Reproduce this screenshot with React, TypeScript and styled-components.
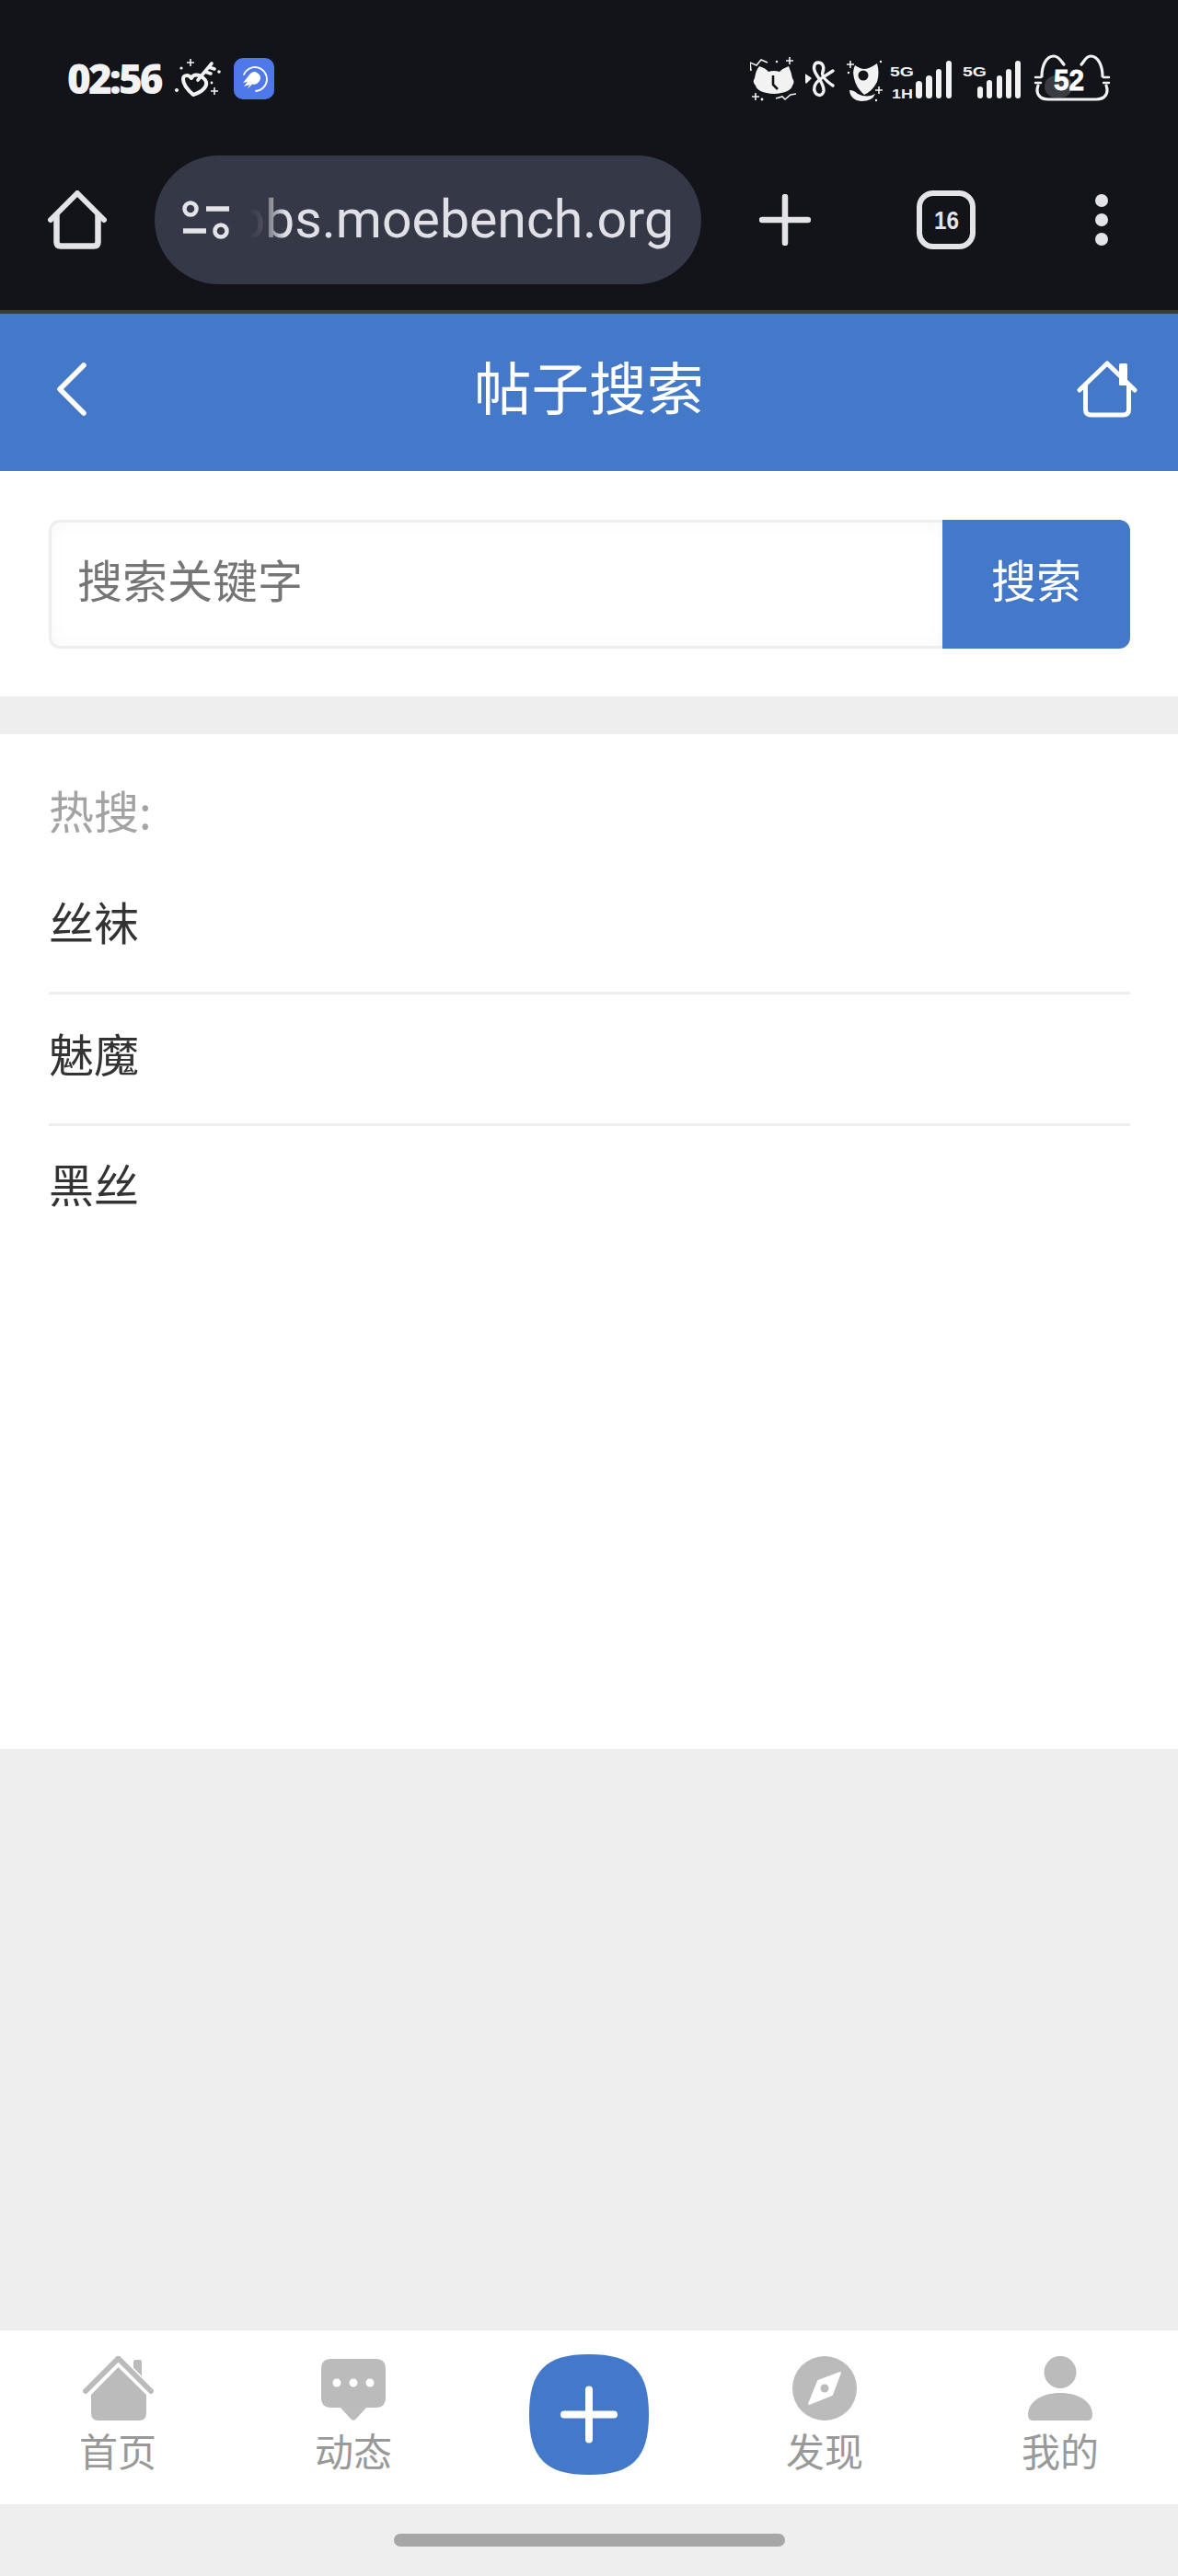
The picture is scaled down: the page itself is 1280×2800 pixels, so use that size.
import React from "react";
import styled, { createGlobalStyle } from "styled-components";

const CJK = `"Noto Sans CJK SC", "Noto Sans", sans-serif`;

const Global = createGlobalStyle`
  html, body { margin: 0; padding: 0; background: #eee; }
  * { box-sizing: border-box; }
  input::placeholder { color: #757575; opacity: 1; }
`;

const Page = styled.div`
  width: 1280px;
  height: 2800px;
  display: flex;
  flex-direction: column;
  background: #eee;
  font-family: ${CJK};
`;

const Chrome = styled.div`
  background: #12141a;
  border-bottom: 4px solid #383a46;
  height: 341px;
  display: flex;
  flex-direction: column;
`;

const StatusBar = styled.div`
  height: 169px;
  padding: 55px 73px 0 73px;
  display: flex;
  justify-content: space-between;
  align-items: flex-start;
`;

const StatusLeft = styled.div`
  height: 60px;
  display: flex;
  align-items: center;
`;

const Time = styled.span`
  width: 117px;
  font-family: "Open Sans", sans-serif;
  font-weight: 800;
  font-size: 44px;
  letter-spacing: -2.8px;
  color: #f2f2f2;
`;

const StatusRight = styled.div`
  display: flex;
  align-items: flex-start;
  height: 60px;
`;

const Toolbar = styled.div`
  display: flex;
  align-items: center;
  height: 140px;
  padding-left: 52px;
`;

const ToolIcon = styled.svg<{ $after: number }>`
  flex: none;
  margin-right: ${(p) => p.$after}px;
  color: #e3e3e8;
`;

const UrlPill = styled.div`
  flex: none;
  width: 594px;
  height: 140px;
  margin-right: 63px;
  border-radius: 70px;
  background: #353846;
  display: flex;
  align-items: center;
  padding-left: 30px;
  padding-right: 30px;
`;

const UrlClip = styled.div`
  flex: 1;
  display: flex;
  justify-content: flex-end;
  overflow: hidden;
  margin-left: 20px;
  mask-image: linear-gradient(to right, transparent 0, rgba(0, 0, 0, 0.12) 14px, rgba(0, 0, 0, 0.5) 24px, #000 40px);
  -webkit-mask-image: linear-gradient(to right, transparent 0, rgba(0, 0, 0, 0.12) 14px, rgba(0, 0, 0, 0.5) 24px, #000 40px);
`;

const UrlText = styled.span`
  font-family: Roboto, "Liberation Sans", sans-serif;
  font-size: 57.2px;
  line-height: 70px;
  color: #e0e0e6;
  white-space: nowrap;
`;

const Header = styled.header`
  height: 171px;
  background: #4478c8;
  display: grid;
  grid-template-columns: 1fr auto 1fr;
  align-items: center;
  padding: 0 44px 8px;
`;

const BackIcon = styled.svg`
  margin-left: 18px;
`;

const Title = styled.h1`
  margin: 0 0 8px;
  font-size: 62.5px;
  font-weight: 400;
  color: #fff;
  line-height: 80px;
`;

const HeaderHome = styled.svg`
  justify-self: end;
`;

const SearchPanel = styled.section`
  background: #fff;
  height: 245px;
  padding: 53px 52px 0 53px;
  display: flex;
  align-items: flex-start;
`;

const SearchInput = styled.input`
  flex: 1;
  min-width: 0;
  height: 140px;
  padding: 0 0 13px 28px;
  border: 3px solid #eee;
  border-right: none;
  border-radius: 12px 0 0 12px;
  box-shadow: inset 0 0 18px rgba(0, 0, 0, 0.035);
  outline: none;
  background: #fff;
  font-family: ${CJK};
  font-size: 49px;
  color: #333;
`;

const SearchButton = styled.button`
  flex: none;
  width: 204px;
  height: 140px;
  padding: 0 0 13px;
  border: none;
  border-radius: 0 12px 12px 0;
  background: #4478c8;
  color: #fff;
  font-family: ${CJK};
  font-size: 49px;
`;

const HotPanel = styled.section`
  margin-top: 41px;
  height: 1103px;
  background: #fff;
  padding: 37px 52px 0 53px;
`;

const HotLabel = styled.div`
  font-size: 49px;
  line-height: 90px;
  color: #a3a3a3;
  height: 103px;
`;

const HotRow = styled.div`
  height: 143px;
  padding-bottom: 15px;
  display: flex;
  align-items: center;
  font-size: 49px;
  color: #333;
  border-bottom: 3px solid #eee;
  &:last-child {
    border-bottom: none;
    padding-bottom: 20px;
  }
`;

const Spacer = styled.div`
  flex: 1;
`;

const BottomNav = styled.nav`
  height: 189px;
  background: #fff;
  display: grid;
  grid-template-columns: repeat(5, 1fr);
`;

const NavItem = styled.div`
  padding-top: 28px;
  display: flex;
  flex-direction: column;
  align-items: center;
`;

const NavIcon = styled.svg`
  display: block;
`;

const NavLabel = styled.span`
  margin-top: 5px;
  font-size: 42px;
  line-height: 54px;
  color: #999;
`;

const PlusCell = styled.div`
  padding-top: 26px;
  display: flex;
  justify-content: center;
`;

const Gesture = styled.div`
  height: 78px;
  padding-top: 32px;
  display: flex;
  justify-content: center;
`;

const GestureBar = styled.div`
  width: 425px;
  height: 14px;
  border-radius: 7px;
  background: #a6a6a6;
`;

const W = "#f2f2f2";
const D = "#12141a";
const GR = "#bbb";

const Spark = ({ x, y, s = 4 }: { x: number; y: number; s?: number }) => (
  <path d={`M${x - s} ${y}H${x + s}M${x} ${y - s}V${y + s}`} stroke={W} strokeWidth={1.6} fill="none" />
);

const KeyIcon = () => (
  <svg width={50} height={50} viewBox="0 0 50 50" style={{ flex: "none", marginRight: 14 }}>
    <path d="M9 26C9 21 15 21 18 25C20 20 27 20 33 27C37 33 30 40 20 43C13 37 9 31 9 26Z" fill="none" stroke={W} strokeWidth={4} strokeLinejoin="round" />
    <path d="M25 27L40 9M37 13L43 15M33 18L39 20" fill="none" stroke={W} strokeWidth={3.6} strokeLinecap="round" />
    <Spark x={17} y={8} />
    <Spark x={43} y={39} />
    <circle cx={7} cy={14} r={1.6} fill={W} />
    <circle cx={48} cy={18} r={1.8} fill={W} />
    <circle cx={2} cy={38} r={2} fill={W} />
    <circle cx={40} cy={30} r={1.4} fill={W} />
  </svg>
);

const AppIcon = () => (
  <svg width={44} height={45} viewBox="0 0 44 45" style={{ flex: "none" }}>
    <rect width={44} height={45} rx={10} fill="#4f78ea" />
    <path d="M11 18A13 13 0 1 1 24 36" fill="none" stroke="#fff" strokeWidth={1.8} strokeLinecap="round" />
    <path d="M18 17A6.5 6.5 0 0 1 28.5 24C27 28 23 29.5 20 28.5L15 33.5L17 29L11 31L15 26L10 27Z" fill="#fff" />
  </svg>
);

const AlarmIcon = () => (
  <svg width={60} height={60} viewBox="0 0 60 60" style={{ flex: "none" }}>
    <path d="M10 17Q17 19 20 23Q26 21 32 23Q36 19 42 17Q45 24 46 30Q49 34 46 38Q44 46 26 47Q8 46 6 38Q2 34 5 30Q6 22 10 17Z" fill={W} />
    <path d="M25 27V37L30 42" fill="none" stroke={D} strokeWidth={2.6} />
    <path d="M1 22L0 13L7 16L12 10L19 13" fill="none" stroke={W} strokeWidth={1.6} />
    <path d="M28 52L35 50L38 53L44 48L50 47" fill="none" stroke={W} strokeWidth={1.6} />
    <Spark x={43} y={11} />
    <Spark x={6} y={50} />
    <circle cx={13} cy={53} r={1.4} fill={W} />
    <circle cx={29} cy={12} r={1.2} fill={W} />
  </svg>
);

const LinkIcon = () => (
  <svg width={45} height={60} viewBox="0 0 45 60" style={{ flex: "none" }}>
    <path d="M30 22L16 31C10 36 8 41 11 46C14 50 19 49 20 44C21 37 14 30 11 24C8 18 10 13 14 13C19 13 21 18 19 23C17 28 24 34 30 38" fill="none" stroke={W} strokeWidth={3.4} strokeLinecap="round" />
    <path d="M0 26L6 30L1 35Z" fill={W} stroke={W} strokeWidth={1.5} strokeLinejoin="round" />
  </svg>
);

const PinIcon = () => (
  <svg width={47} height={60} viewBox="0 0 47 60" style={{ flex: "none" }}>
    <path d="M9 16Q15 20 19 20Q24 20 33 14Q36 24 33 34Q28 44 19 48Q10 40 8 30Q6 22 9 16Z" fill={W} />
    <circle cx={18} cy={27} r={5.5} fill={D} />
    <path d="M3 43Q4 54 16 55Q28 55 31 47Q22 52 12 47Q8 43 3 43Z" fill={W} />
    <Spark x={4} y={15} />
    <Spark x={35} y={43} />
    <circle cx={2} cy={24} r={1.2} fill={W} />
    <circle cx={37} cy={12} r={1.2} fill={W} />
    <circle cx={32} cy={54} r={1.2} fill={W} />
  </svg>
);

const SigText = styled.text`
  font-family: "Liberation Sans", sans-serif;
  font-weight: 700;
  font-size: 15.5px;
  fill: ${W};
`;

const Bars = ({ bars }: { bars: [number, number, number][] }) => (
  <>
    {bars.map(([x, w, top]) => (
      <rect key={x} x={x} y={top} width={w} height={52 - top} rx={w / 2} fill={W} />
    ))}
  </>
);

const Signal1 = () => (
  <svg width={78} height={60} viewBox="0 0 78 60" style={{ flex: "none" }}>
    <SigText x={0} y={28} textLength={26} lengthAdjust="spacingAndGlyphs">5G</SigText>
    <SigText x={2} y={52} textLength={23} lengthAdjust="spacingAndGlyphs">1H</SigText>
    <Bars bars={[[28, 7, 33], [39, 7, 27], [50, 6, 20], [61, 6, 11]]} />
  </svg>
);

const Signal2 = () => (
  <svg width={78} height={60} viewBox="0 0 78 60" style={{ flex: "none" }}>
    <SigText x={1} y={28} textLength={26} lengthAdjust="spacingAndGlyphs">5G</SigText>
    <Bars bars={[[17, 6, 39], [27, 6, 32], [38, 6, 27], [48, 6, 20], [58, 6, 11]]} />
  </svg>
);

const BatteryText = styled.text`
  font-family: "Liberation Sans", sans-serif;
  font-weight: 700;
  font-size: 31px;
  fill: #fff;
  stroke: #fff;
  stroke-width: 0.8px;
`;

const BatteryIcon = () => (
  <svg width={84} height={60} viewBox="0 0 84 60" style={{ flex: "none" }}>
    <path d="M9 28C9 16 14 6 22 6C28 6 30 12 33 15M52 15C55 12 57 6 62 6C70 6 75 16 75 28" fill="none" stroke={W} strokeWidth={3.2} strokeLinecap="round" />
    <path d="M5 38C2 46 6 53 16 53H68C78 53 82 46 79 38" fill="none" stroke={W} strokeWidth={3.2} strokeLinecap="round" />
    <path d="M2 29H8M2 35H8M76 29H82M76 35H82" stroke={W} strokeWidth={2.4} strokeLinecap="round" />
    <rect x={12} y={27} width={30} height={24} rx={12} fill="#3a3c42" />
    <BatteryText x={22} y={43} textLength={33} lengthAdjust="spacingAndGlyphs">52</BatteryText>
  </svg>
);

const TabText = styled.text`
  font-family: "Liberation Sans", sans-serif;
  font-weight: 700;
  font-size: 28px;
  fill: currentColor;
`;

const ChromeHome = () => (
  <ToolIcon $after={52} width={64} height={64} viewBox="0 0 64 64">
    <path d="M3 32L32 3L61 32" fill="none" stroke="currentColor" strokeWidth={6} strokeLinecap="round" strokeLinejoin="round" />
    <path d="M9.5 27V56Q9.5 60.5 14 60.5H50Q54.5 60.5 54.5 56V27" fill="none" stroke="currentColor" strokeWidth={6.5} strokeLinecap="round" />
  </ToolIcon>
);

const TuneIcon = () => (
  <svg width={52} height={42} viewBox="0 0 52 42" style={{ flex: "none", color: "#e3e3e8" }}>
    <circle cx={9} cy={9} r={6.5} fill="none" stroke="currentColor" strokeWidth={4.5} />
    <circle cx={42} cy={33} r={6.5} fill="none" stroke="currentColor" strokeWidth={4.5} />
    <path d="M26 9H51M1 33H26" stroke="currentColor" strokeWidth={5.5} />
  </svg>
);

const NavHome = () => (
  <NavIcon width={77} height={70} viewBox="0 0 77 70">
    <rect x={55} y={4} width={9} height={22} rx={2} fill={GR} />
    <path d="M3 38L38.5 2.5L74 38" fill="none" stroke="#fff" strokeWidth={9} />
    <path d="M3 38L38.5 2.5L74 38" fill="none" stroke={GR} strokeWidth={6} strokeLinecap="round" strokeLinejoin="round" />
    <path d="M38.5 12L69 42V62Q69 70 61 70H17Q9 70 9 62V42Z" fill={GR} />
  </NavIcon>
);

const NavChat = () => (
  <NavIcon width={70} height={70} viewBox="0 0 70 70">
    <path d="M11 3H59Q70 3 70 14V45Q70 56 59 56H49L38 68Q35 71 32 68L21 56H11Q0 56 0 45V14Q0 3 11 3Z" fill={GR} />
    <circle cx={17} cy={29} r={4.5} fill="#fff" />
    <circle cx={35} cy={29} r={4.5} fill="#fff" />
    <circle cx={53} cy={29} r={4.5} fill="#fff" />
  </NavIcon>
);

const NavCompass = () => (
  <NavIcon width={70} height={70} viewBox="0 0 70 70">
    <circle cx={35} cy={35} r={35} fill={GR} />
    <path d="M52 18L43 42L18 52L28 27Z" fill="#fff" stroke="#fff" strokeWidth={2} strokeLinejoin="round" />
    <circle cx={35} cy={35} r={4.5} fill={GR} />
  </NavIcon>
);

const NavPerson = () => (
  <NavIcon width={70} height={70} viewBox="0 0 70 70">
    <circle cx={35} cy={17.5} r={17.5} fill={GR} />
    <path d="M0 64C0 50 14 40 35 40C56 40 70 50 70 64Q70 70 64 70H6Q0 70 0 64Z" fill={GR} />
  </NavIcon>
);

const PlusButton = () => (
  <svg width={130} height={131} viewBox="0 0 130 131">
    <path d="M65 0C112 0 130 18 130 65.5C130 113 112 131 65 131C18 131 0 113 0 65.5C0 18 18 0 65 0Z" fill="#4478c8" />
    <path d="M38 65.5H92M65 38.5V92.5" stroke="#fff" strokeWidth={8} strokeLinecap="round" />
  </svg>
);

const hotWords = ["丝袜", "魅魔", "黑丝"];

export default function App() {
  return (
    <Page>
      <Global />
      <Chrome>
        <StatusBar>
          <StatusLeft>
            <Time>02:56</Time>
            <KeyIcon />
            <AppIcon />
          </StatusLeft>
          <StatusRight>
            <AlarmIcon />
            <LinkIcon />
            <PinIcon />
            <Signal1 />
            <Signal2 />
            <BatteryIcon />
          </StatusRight>
        </StatusBar>
        <Toolbar>
          <ChromeHome />
          <UrlPill>
            <TuneIcon />
            <UrlClip>
              <UrlText>bbs.moebench.org</UrlText>
            </UrlClip>
          </UrlPill>
          <ToolIcon $after={115} width={56} height={56} viewBox="0 0 56 56">
            <path d="M3 28H53M28 3V53" stroke="currentColor" strokeWidth={6.5} strokeLinecap="round" />
          </ToolIcon>
          <ToolIcon $after={130} width={64} height={64} viewBox="0 0 64 64">
            <rect x={3} y={3} width={58} height={58} rx={15} fill="none" stroke="currentColor" strokeWidth={6} />
            <TabText x={19} y={42} textLength={27} lengthAdjust="spacingAndGlyphs">16</TabText>
          </ToolIcon>
          <ToolIcon $after={0} width={14} height={56} viewBox="0 0 14 56">
            <circle cx={7} cy={7} r={7} fill="currentColor" />
            <circle cx={7} cy={28} r={7} fill="currentColor" />
            <circle cx={7} cy={49} r={7} fill="currentColor" />
          </ToolIcon>
        </Toolbar>
      </Chrome>

      <Header>
        <BackIcon width={32} height={58} viewBox="0 0 32 58">
          <path d="M29 3L3 29L29 55" fill="none" stroke="#fff" strokeWidth={5.5} strokeLinecap="round" strokeLinejoin="round" />
        </BackIcon>
        <Title>帖子搜索</Title>
        <HeaderHome width={66} height={62} viewBox="0 0 66 62">
          <rect x={46} y={3} width={9} height={24} rx={1.5} fill="#fff" />
          <path d="M3 32L33 3L63 32" fill="none" stroke="#fff" strokeWidth={5} strokeLinecap="round" strokeLinejoin="round" />
          <path d="M9.5 27V53Q9.5 59 15.5 59H50.5Q56.5 59 56.5 53V27" fill="none" stroke="#fff" strokeWidth={5} strokeLinecap="round" />
        </HeaderHome>
      </Header>

      <SearchPanel>
        <SearchInput placeholder="搜索关键字" />
        <SearchButton>搜索</SearchButton>
      </SearchPanel>

      <HotPanel>
        <HotLabel>热搜:</HotLabel>
        {hotWords.map((w) => (
          <HotRow key={w}>{w}</HotRow>
        ))}
      </HotPanel>

      <Spacer />

      <BottomNav>
        <NavItem>
          <NavHome />
          <NavLabel>首页</NavLabel>
        </NavItem>
        <NavItem>
          <NavChat />
          <NavLabel>动态</NavLabel>
        </NavItem>
        <PlusCell>
          <PlusButton />
        </PlusCell>
        <NavItem>
          <NavCompass />
          <NavLabel>发现</NavLabel>
        </NavItem>
        <NavItem>
          <NavPerson />
          <NavLabel>我的</NavLabel>
        </NavItem>
      </BottomNav>
      <Gesture>
        <GestureBar />
      </Gesture>
    </Page>
  );
}
